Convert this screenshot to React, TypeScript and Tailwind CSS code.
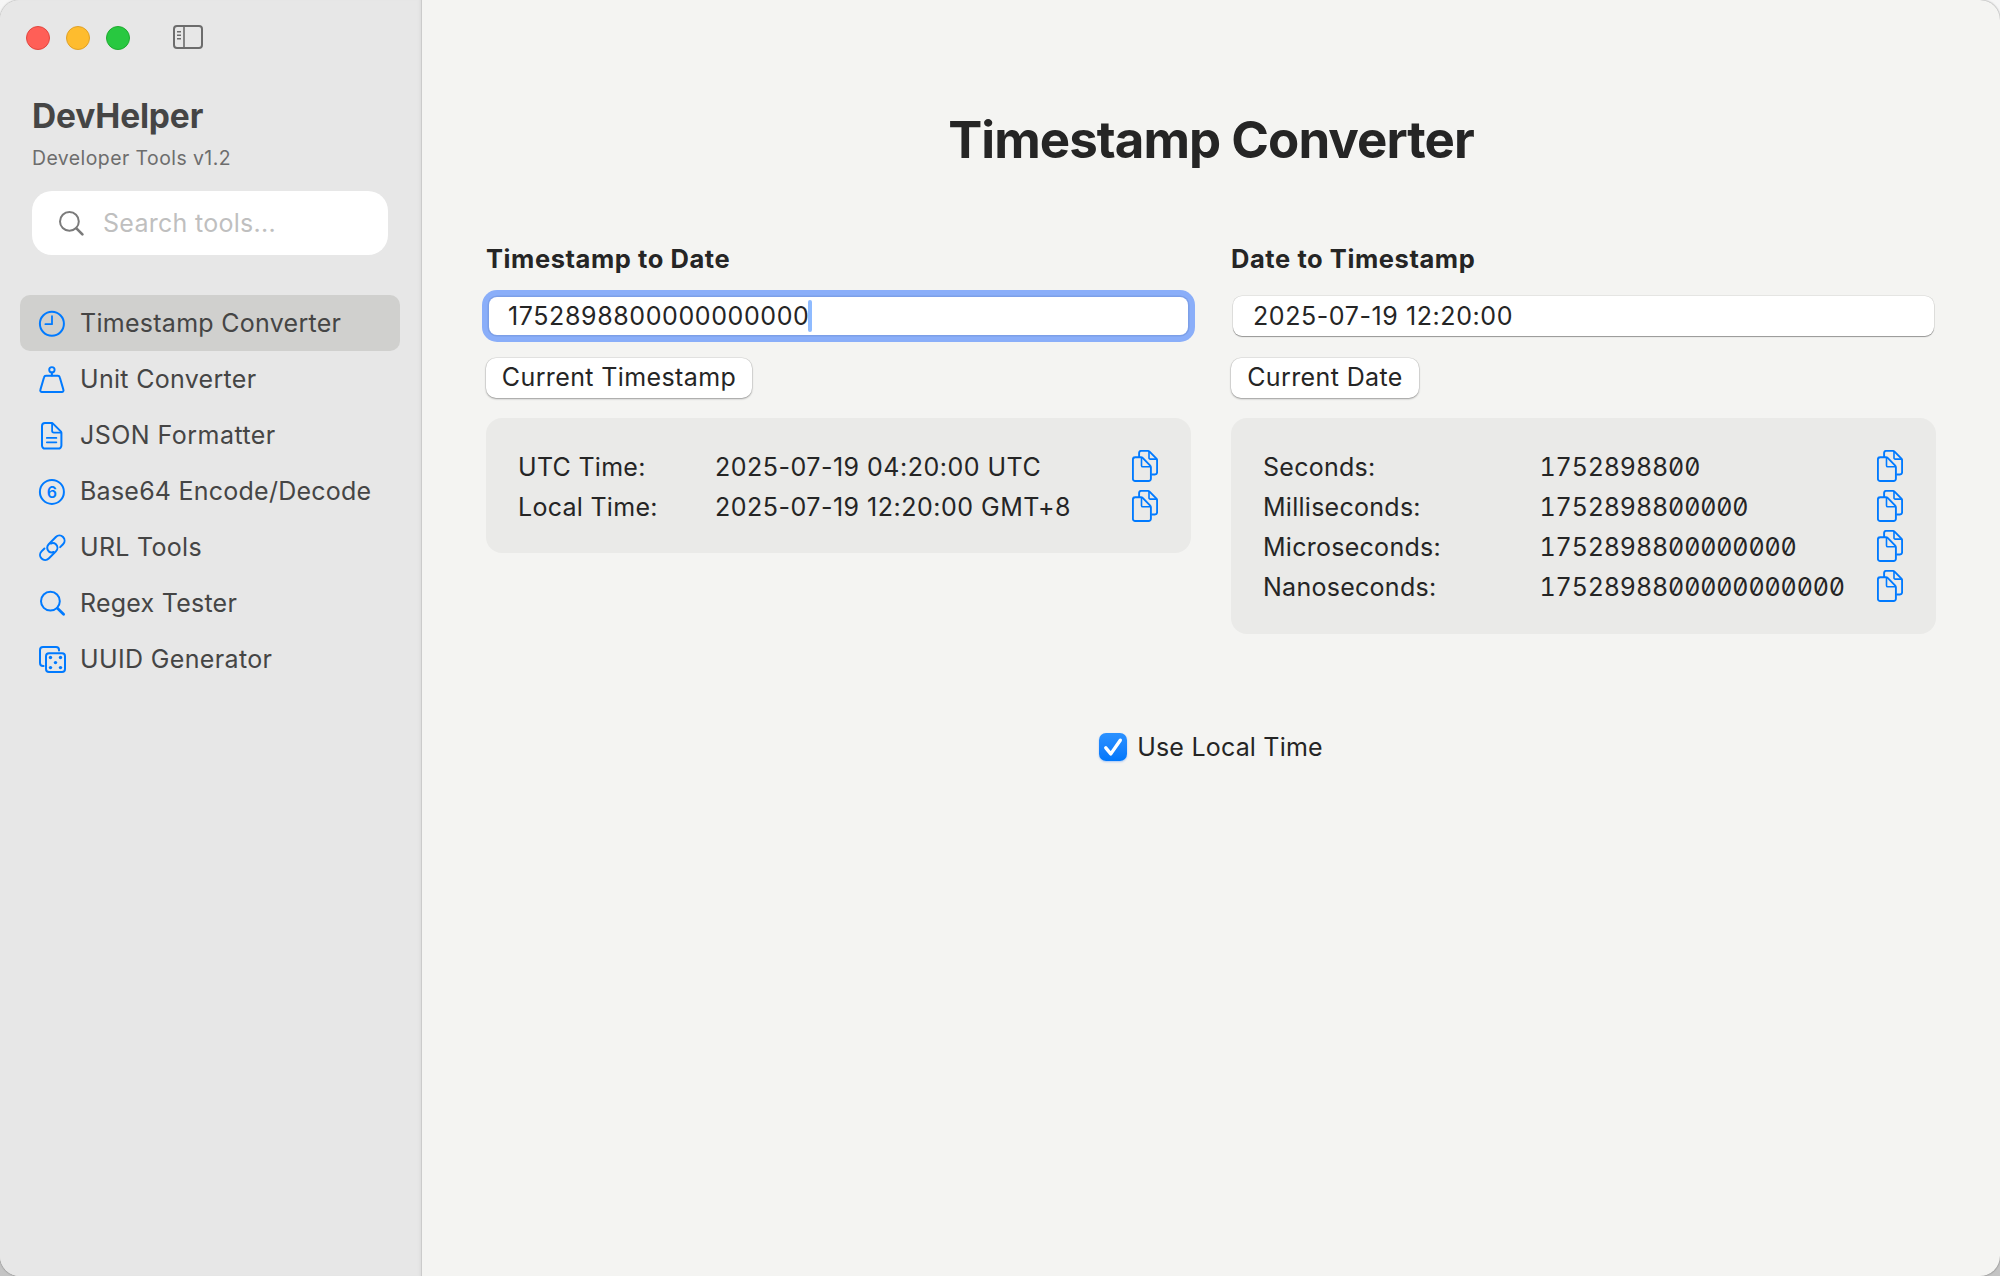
import React from 'react';

type IconProps = { className?: string };

const iconBase = {
  viewBox: '0 0 28 28',
  fill: 'none',
  stroke: 'currentColor',
  strokeWidth: 2,
  strokeLinecap: 'round' as const,
  strokeLinejoin: 'round' as const,
  className: 'h-7 w-7 shrink-0 overflow-visible text-[#007aff]',
};

function ClockIcon() {
  return (
    <svg {...iconBase}>
      <circle cx="13.9" cy="14.8" r="12" />
      <path d="M14 7.2v8H7.4" strokeWidth="1.8" />
    </svg>
  );
}

function WeightIcon() {
  return (
    <svg {...iconBase}>
      <circle cx="13.9" cy="4.8" r="2.7" strokeWidth="1.9" />
      <path d="M13.9 7.6v3" />
      <path d="M8 10.8h11.8a2 2 0 0 1 1.95 1.5l3.7 12.6a1.6 1.6 0 0 1-1.6 2.1H3.95a1.6 1.6 0 0 1-1.6-2.1l3.7-12.6A2 2 0 0 1 8 10.8Z" />
    </svg>
  );
}

function DocumentIcon() {
  return (
    <svg {...iconBase}>
      <path d="M13.6 2H7a3 3 0 0 0-3 3v19.6a3 3 0 0 0 3 3h13.4a3 3 0 0 0 3-3V11.8a2 2 0 0 0-.6-1.4L15 2.6a2 2 0 0 0-1.4-.6Z" />
      <path d="M14.1 2.4v7.4a1.8 1.8 0 0 0 1.8 1.8h7.2" strokeWidth="1.8" />
      <path d="M8.8 16.9h9.6M8.8 21.3h9.6" strokeWidth="1.7" />
    </svg>
  );
}

function SixCircleIcon() {
  return (
    <svg {...iconBase}>
      <circle cx="13.9" cy="14.9" r="12" />
      <text
        x="13.9"
        y="20.6"
        textAnchor="middle"
        fill="currentColor"
        stroke="none"
        className="font-['Inter',sans-serif] text-[16px] font-semibold"
      >
        6
      </text>
    </svg>
  );
}

function LinkIcon() {
  return (
    <svg {...iconBase}>
      <g transform="translate(14.3 14.8) rotate(-45)">
        <path d="M6 5.1H10.1A5.1 5.1 0 0 0 10.1-5.1H0A5.1 5.1 0 0 0-5.1 0A5 5 0 0 0-2 4" />
        <path d="M-6-5.1H-10.1A5.1 5.1 0 0 0-10.1 5.1H0A5.1 5.1 0 0 0 5.1 0A5 5 0 0 0 2-4" />
      </g>
    </svg>
  );
}

function MagnifierIcon() {
  return (
    <svg {...iconBase}>
      <circle cx="12.4" cy="12.2" r="9.4" />
      <path d="m19.4 19.2 6.2 6" strokeWidth="2.8" />
    </svg>
  );
}

function DiceIcon() {
  return (
    <svg {...iconBase}>
      <path d="M21 5.4V5a3 3 0 0 0-3-3H5a3 3 0 0 0-3 3v13a3 3 0 0 0 3 3h.6" />
      <rect x="8" y="8.2" width="19" height="18.8" rx="3" />
      <g fill="currentColor" stroke="none">
        <circle cx="12.5" cy="12.5" r="1.7" />
        <circle cx="22.5" cy="12.5" r="1.7" />
        <circle cx="17.5" cy="17.6" r="1.7" />
        <circle cx="12.5" cy="22.6" r="1.7" />
        <circle cx="22.5" cy="22.6" r="1.7" />
      </g>
    </svg>
  );
}

function CopyIcon({ className = '' }: IconProps) {
  return (
    <svg
      viewBox="0 0 26 32"
      fill="none"
      stroke="#007aff"
      strokeWidth="1.9"
      strokeLinejoin="round"
      strokeLinecap="round"
      className={'h-8 w-[26px] shrink-0 ' + className}
    >
      <path d="M7.1 6.6V3.2A2.3 2.3 0 0 1 9.4.9h6.3a3 3 0 0 1 2.1.9l6.4 6.5a3 3 0 0 1 .9 2.1v11.8a2.3 2.3 0 0 1-2.3 2.3h-2.6" />
      <path d="M17 1.6v6.3a1.2 1.2 0 0 0 1.2 1.2h6.4" strokeWidth="1.6" />
      <path d="M3.2 7.3h5.6a3 3 0 0 1 2.1.9l7.1 7.2a3 3 0 0 1 .9 2.1v11.200A2.3 2.3 0 0 1 16.6 31H3.2A2.3 2.3 0 0 1 .9 28.700V9.600A2.3 2.3 0 0 1 3.2 7.3Z" />
      <path d="M9.5 7.800v7.600a1.400 1.400 0 0 0 1.400 1.400h7.400" strokeWidth="1.6" />
    </svg>
  );
}

function SidebarToggleIcon() {
  return (
    <svg viewBox="0 0 30 24" fill="none" stroke="#6c6c6c" className="h-6 w-[30px]">
      <rect x="1" y="1" width="28" height="22" rx="3" strokeWidth="2" />
      <path d="M11 1v22" strokeWidth="1.6" />
      <path d="M4 6.700h4M4 10.200h4M4 13.700h4" strokeWidth="1.400" />
    </svg>
  );
}

const tools = [
  { label: 'Timestamp Converter', Icon: ClockIcon, tracking: 'tracking-[0.28px]', active: true },
  { label: 'Unit Converter', Icon: WeightIcon, tracking: 'tracking-[0.3px]' },
  { label: 'JSON Formatter', Icon: DocumentIcon, tracking: 'tracking-[0.46px]' },
  { label: 'Base64 Encode/Decode', Icon: SixCircleIcon, tracking: 'tracking-[0.24px]' },
  { label: 'URL Tools', Icon: LinkIcon, tracking: 'tracking-[0.3px]' },
  { label: 'Regex Tester', Icon: MagnifierIcon, tracking: 'tracking-[0.24px]' },
  { label: 'UUID Generator', Icon: DiceIcon, tracking: 'tracking-[0.36px]' },
];

function Sidebar() {
  return (
    <aside className="flex w-[422px] shrink-0 flex-col border-r border-[#cbcbcb] bg-[#e7e7e7] shadow-[inset_-3px_0_3px_-2px_#dadada] text-[#454545]">
      <div className="flex h-[76px] items-center pl-[26px]">
        <div className="flex gap-4">
          <span className="h-6 w-6 rounded-full border border-[#e2463f] bg-[#ff5f57]" />
          <span className="h-6 w-6 rounded-full border border-[#e0a127] bg-[#febc2e]" />
          <span className="h-6 w-6 rounded-full border border-[#1eab2f] bg-[#28c840]" />
        </div>
        <div className="-mt-0.5 ml-[43px]">
          <SidebarToggleIcon />
        </div>
      </div>

      <div className="pl-8 pt-5">
        <h1 className="h-10 text-[33.5px] leading-10 font-bold tracking-[-0.15px]">DevHelper</h1>
        <p className="mt-2 h-7 text-[19.4px] leading-7 tracking-[0.46px] text-[#6d6d6d]">Developer Tools v1.2</p>
      </div>

      <div className="mt-[19px] mr-[33px] ml-8 flex h-16 items-center rounded-[20px] bg-white pl-[27px]">
        <svg
          viewBox="0 0 26 26"
          fill="none"
          stroke="#7b7b7b"
          strokeWidth="2"
          strokeLinecap="round"
          className="mt-px h-[26px] w-[26px]"
        >
          <circle cx="10.4" cy="10.400" r="9.400" />
          <path d="m17.400 17.400 6 6" strokeWidth="2.700" />
        </svg>
        <span className="ml-[18px] pt-0.5 text-[25px] tracking-[0.28px] text-[#bfbfbf]">Search tools...</span>
      </div>

      <nav className="mt-10 ml-5 flex w-[380px] flex-col">
        {tools.map(({ label, Icon, tracking, active }) => (
          <div
            key={label}
            className={
              active
                ? 'flex h-14 items-center rounded-[10px] bg-[#d0d0ce] pl-[18px]'
                : 'flex h-14 items-center rounded-[10px] pl-[18px]'
            }
          >
            <Icon />
            <span className={'ml-3.5 pt-0.5 text-[25px] whitespace-nowrap ' + tracking}>{label}</span>
          </div>
        ))}
      </nav>
    </aside>
  );
}

function SectionHeading({ children }: { children: React.ReactNode }) {
  return <h3 className="h-8 text-[25.5px] leading-8 font-bold tracking-[0.57px]">{children}</h3>;
}

function PushButton({ children, className }: { children: React.ReactNode; className: string }) {
  return (
    <button
      className={
        'mt-[21px] flex h-10 items-center justify-center rounded-[10px] bg-white text-[25px] tracking-[0.38px] whitespace-nowrap shadow-[0_0_0_0.5px_rgba(0,0,0,0.12),0_1px_2px_rgba(0,0,0,0.32)] ' +
        className
      }
    >
      {children}
    </button>
  );
}

const dateRows = [
  ['UTC Time:', '2025-07-19 04:20:00 UTC'],
  ['Local Time:', '2025-07-19 12:20:00 GMT+8'],
];

const stampRows = [
  ['Seconds:', '1752898800'],
  ['Milliseconds:', '1752898800000'],
  ['Microseconds:', '1752898800000000'],
  ['Nanoseconds:', '1752898800000000000'],
];

export default function App() {
  return (
    <div className="h-[1276px] w-[2000px] bg-linear-to-b from-[#f6f6f6] to-[#c4c4c4] font-['Inter',sans-serif] text-[#252525]">
      <div className="flex h-full w-full overflow-hidden rounded-[20px] bg-[#f4f4f2] shadow-[0_0_2px_rgba(0,0,0,0.5)]">
        <Sidebar />

        <main className="flex-1 px-16 pt-[105px]">
          <h2 className="h-[68px] pt-px text-center text-[51px] leading-[68px] font-bold tracking-[-0.95px]">
            Timestamp Converter
          </h2>

          <div className="mt-[70px] grid grid-cols-2 items-start gap-10">
            <section>
              <SectionHeading>Timestamp to Date</SectionHeading>
              <div className="mt-5 flex h-[42px] items-center">
                <div className="mx-[3px] flex h-[38px] flex-1 items-center rounded-lg bg-white pl-[19px] shadow-[0_0_0_1.5px_#7c9fe8,0_0_0_7px_#8aaef9]">
                  <span className="pt-0.5 text-[25px] tracking-[0.61px]">1752898800000000000</span>
                  <span className="-ml-0.5 h-8 w-1 rounded-xs bg-[#8fbbff]" />
                </div>
              </div>
              <PushButton className="w-[266px]">Current Timestamp</PushButton>
              <div className="mt-5 h-[135px] rounded-2xl bg-[#eaeae8] pt-7 pr-[33px] pl-8 text-[25px]">
                {dateRows.map(([label, value]) => (
                  <div key={label} className="flex h-10 items-center">
                    <span className="w-[197px] pt-[3px] tracking-[0.28px]">{label}</span>
                    <span className="flex-1 pt-[3px] tracking-[0.5px]">{value}</span>
                    <CopyIcon />
                  </div>
                ))}
              </div>
            </section>

            <section>
              <SectionHeading>Date to Timestamp</SectionHeading>
              <div className="mt-5 flex h-[42px] items-center">
                <div className="mx-0.5 flex h-10 flex-1 items-center rounded-[9px] bg-white pl-5 shadow-[0_0_0_0.5px_rgba(0,0,0,0.12),0_1px_1px_rgba(0,0,0,0.35)]">
                  <span className="pt-0.5 text-[25px] tracking-[0.58px]">2025-07-19 12:20:00</span>
                </div>
              </div>
              <PushButton className="w-[188px]">Current Date</PushButton>
              <div className="mt-5 h-[216px] rounded-2xl bg-[#eaeae8] pt-7 pr-[33px] pl-8 text-[25px]">
                {stampRows.map(([label, value]) => (
                  <div key={label} className="flex h-10 items-center">
                    <span className="w-[276.5px] pt-[3px] tracking-[0.27px]">{label}</span>
                    <span className="flex-1 pt-[3px] tracking-[-0.14px] tabular-nums slashed-zero">{value}</span>
                    <CopyIcon />
                  </div>
                ))}
              </div>
            </section>
          </div>

          <label className="mt-[99px] flex h-7 items-center justify-center">
            <span className="flex h-7 w-7 rounded-[7px] bg-linear-to-b from-[#2b91ff] to-[#0077fb] shadow-[0_1px_2px_rgba(0,100,255,0.3)]">
              <svg
                viewBox="0 0 28 28"
                fill="none"
                stroke="#fff"
                strokeWidth="3.4"
                strokeLinecap="round"
                strokeLinejoin="round"
                className="h-7 w-7"
              >
                <path d="m6.800 14.900 5 6L21.300 7.200" />
              </svg>
            </span>
            <span className="ml-2.5 pt-px text-[25px] tracking-[0.2px]">Use Local Time</span>
          </label>
        </main>
      </div>
    </div>
  );
}
